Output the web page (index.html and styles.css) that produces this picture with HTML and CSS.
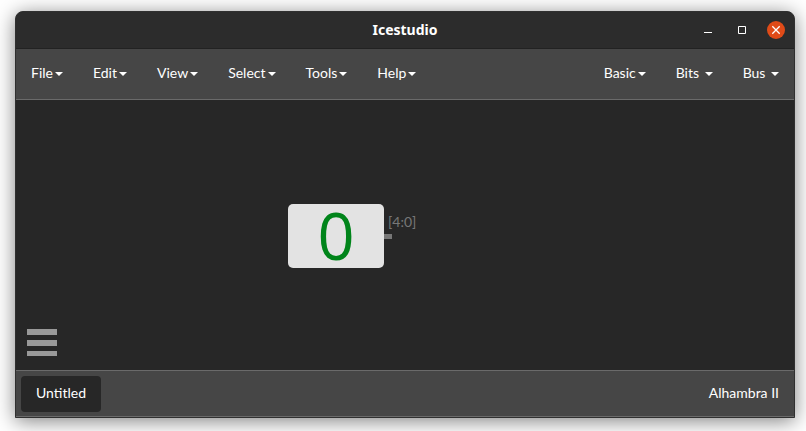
FILE: index.html
```html
<!DOCTYPE html>
<html lang="en">
<head>
<meta charset="utf-8">
<title>Icestudio</title>
<link rel="stylesheet" href="styles.css">
</head>
<body>
<div class="window">
  <header class="titlebar">
    <h1 class="title">Icestudio</h1>
    <div class="controls">
      <button class="control" type="button" aria-label="Minimize"><svg width="18" height="18" viewBox="0 0 18 18"><path d="M5 11.500h8" stroke="#fff"/></svg></button>
      <button class="control" type="button" aria-label="Maximize"><svg width="18" height="18" viewBox="0 0 18 18"><path d="M5.500 5.500h7v7h-7z" fill="none" stroke="#fff"/></svg></button>
      <button class="control close" type="button" aria-label="Close"><svg width="18" height="18" viewBox="0 0 18 18"><path d="M5.300 5.300l7.400 7.400M12.700 5.300l-7.400 7.400" stroke="#fff" stroke-width="1.300"/></svg></button>
    </div>
  </header>
  <nav class="menubar">
    <div class="menu">
      <button class="item" type="button">File<span class="caret"></span></button>
      <button class="item" type="button">Edit<span class="caret"></span></button>
      <button class="item" type="button">View<span class="caret"></span></button>
      <button class="item" type="button">Select<span class="caret"></span></button>
      <button class="item" type="button">Tools<span class="caret"></span></button>
      <button class="item" type="button">Help<span class="caret"></span></button>
    </div>
    <div class="menu">
      <button class="item" type="button">Basic<span class="caret"></span></button>
      <button class="item" type="button">Bits <span class="caret"></span></button>
      <button class="item" type="button">Bus <span class="caret"></span></button>
    </div>
  </nav>
  <main class="canvas">
    <div class="block">
      <span class="value">0</span>
      <span class="port"></span>
      <span class="range">[4:0]</span>
    </div>
    <button class="toggle" type="button" aria-label="Menu"><span class="bar"></span><span class="bar"></span><span class="bar"></span></button>
  </main>
  <footer class="footer">
    <button class="tab" type="button">Untitled</button>
    <span class="board">Alhambra II</span>
  </footer>
</div>
</body>
</html>
```
FILE: styles.css
```css
* {
  box-sizing: border-box;
}

body {
  display: flex;
  height: 100vh;
  margin: 0;
  padding: 11px 11px 13px 15px;
  background: #fff;
  color: #fff;
  font: 14px/20px Lato, "Liberation Sans", sans-serif;
}

button {
  padding: 0;
  border: 0;
  background: none;
  color: inherit;
  font: inherit;
}

.window {
  display: flex;
  flex: 1;
  flex-direction: column;
  overflow: hidden;
  border: 1px solid #303030;
  border-radius: 8px 8px 0 0;
  background: #272727;
  box-shadow: 0 3px 20px rgba(0, 0, 0, 0.5);
}

.titlebar {
  display: grid;
  grid-template-columns: 1fr auto 1fr;
  align-items: center;
  height: 37px;
  border-bottom: 1px solid #222;
  background: #2c2c2c;
}

.title {
  grid-column: 2;
  margin: 0;
  font: bold 14px/20px "Noto Sans", "Open Sans", sans-serif;
}

.controls {
  display: flex;
  justify-content: flex-end;
  gap: 16px;
  padding-right: 9px;
}

.control {
  width: 18px;
  height: 18px;
  border-radius: 50%;
}

.control svg {
  display: block;
}

.close {
  background: #e04b18;
}

.menubar {
  display: flex;
  justify-content: space-between;
  height: 51px;
  border-bottom: 1px solid #6a6a6a;
  background: #464646;
}

.menu {
  display: flex;
}

.item {
  padding: 0 15px 2px;
  white-space: pre;
}

.caret {
  display: inline-block;
  margin-left: 2px;
  border: 4px solid transparent;
  border-top-color: #fff;
  border-bottom: 0;
  vertical-align: middle;
}

.canvas {
  position: relative;
  flex: 1;
}

.block {
  position: absolute;
  top: 104px;
  left: 272px;
  width: 96px;
  height: 64px;
  border-radius: 5px;
  background: #e3e3e3;
}

.value {
  display: block;
  color: #00841a;
  font-family: "Open Sans", "Noto Sans", sans-serif;
  font-size: 65px;
  line-height: 62px;
  text-align: center;
}

.port {
  position: absolute;
  top: 30px;
  left: 100%;
  width: 8px;
  height: 5px;
  background: #777;
}

.range {
  position: absolute;
  top: 8px;
  left: 100px;
  color: #777;
}

.toggle {
  position: absolute;
  bottom: 14px;
  left: 11px;
  display: flex;
  flex-direction: column;
  gap: 5px;
  width: 30px;
}

.bar {
  height: 6px;
  background: #999;
}

.bar:last-child {
  height: 5px;
}

.footer {
  display: flex;
  align-items: center;
  justify-content: space-between;
  height: 47px;
  padding: 0 15px 0 5px;
  border-top: 1px solid #6a6a6a;
  border-bottom: 1px solid #6a6a6a;
  background: #464646;
}

.tab {
  height: 36px;
  padding: 0 15px 2px;
  border-radius: 4px;
  background: #272727;
}

.board {
  padding-bottom: 2px;
}
```
